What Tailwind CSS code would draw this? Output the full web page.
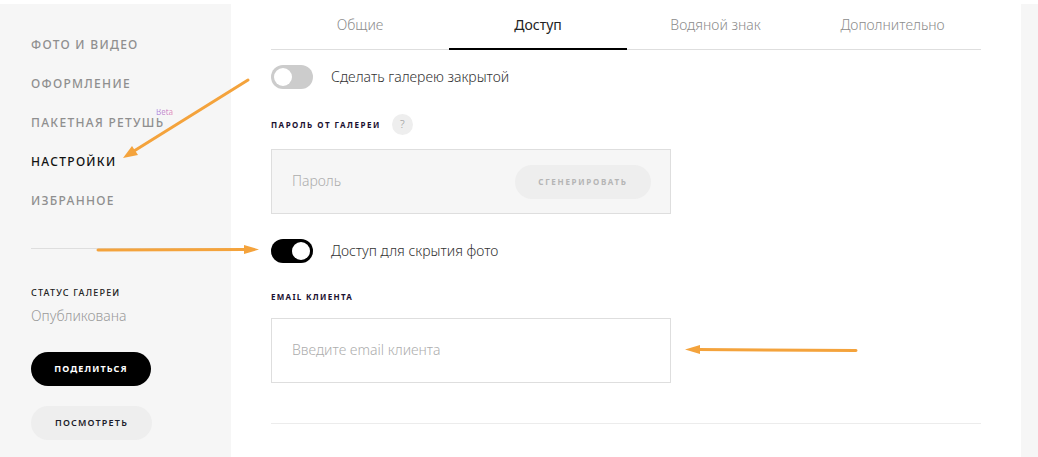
<!DOCTYPE html>
<html lang="ru">
<head>
  <meta charset="UTF-8">
  <title>Настройки галереи</title>
  <script src="https://cdn.jsdelivr.net/npm/@tailwindcss/browser@4"></script>
</head>
<body class="bg-white w-[1038px] h-[457px] overflow-hidden relative font-['Noto_Sans',sans-serif]">
  <div class="flex h-[457px] pt-1">
    <!-- sidebar -->
    <aside class="w-[231px] shrink-0 bg-[#f6f6f6] pl-[31px] pr-[31px]">
      <nav class="flex flex-col gap-[21px] pt-[32px] text-[12px] leading-[18px] font-medium tracking-[1.3px] text-[#8f8f8f]">
        <a>ФОТО И ВИДЕО</a>
        <a>ОФОРМЛЕНИЕ</a>
        <a class="relative">ПАКЕТНАЯ РЕТУШЬ<span class="absolute left-[125px] top-[-5px] text-[8px] leading-[6px] font-normal tracking-normal bg-gradient-to-r from-[#a88be2] to-[#e284b4] bg-clip-text text-transparent">Beta</span></a>
        <a class="text-[#111]">НАСТРОЙКИ</a>
        <a>ИЗБРАННОЕ</a>
      </nav>
      <div class="h-px bg-[#dedede] mt-[38px] w-[200px]"></div>
      <div class="mt-[38px] text-[9px] leading-[12px] font-medium tracking-[1.2px] text-[#222]">СТАТУС ГАЛЕРЕИ</div>
      <div class="mt-[7px] text-[14px] leading-[20px] font-light text-[#9a9a9a]">Опубликована</div>
      <button class="block mt-[26px] w-[120px] h-[34px] rounded-full bg-black text-white text-[9px] font-bold tracking-[1.1px]">ПОДЕЛИТЬСЯ</button>
      <button class="block mt-[20px] w-[121px] h-[34px] rounded-full bg-[#eeeeee] text-[#1c1c2a] text-[9px] font-semibold tracking-[1.2px]">ПОСМОТРЕТЬ</button>
    </aside>

    <!-- main -->
    <main class="w-[710px] ml-[40px] shrink-0">
      <div class="grid grid-cols-[178px_178px_177px_177px] h-[46px] border-b border-[#dedede] text-[14px] font-light text-[#8c8c8c] text-center">
        <div class="pt-[11px] leading-[20px]">Общие</div>
        <div class="pt-[11px] leading-[20px] text-[#222] font-normal border-b-2 border-black h-[46px]">Доступ</div>
        <div class="pt-[11px] leading-[20px]">Водяной знак</div>
        <div class="pt-[11px] leading-[20px]">Дополнительно</div>
      </div>

      <div class="flex items-center mt-[15px] h-6">
        <div class="w-[42px] h-6 rounded-full bg-[#cccccc] p-[3px] flex justify-start"><span class="w-[18px] h-[18px] rounded-full bg-white"></span></div>
        <span class="ml-[18px] pb-[2px] text-[14px] font-light text-[#333]">Сделать галерею закрытой</span>
      </div>

      <div class="flex items-center mt-[25px] h-[21px]">
        <span class="text-[8px] font-bold tracking-[1.5px] text-[#1a1030]">ПАРОЛЬ ОТ ГАЛЕРЕИ</span>
        <span class="ml-[11px] w-[21px] h-[21px] rounded-full bg-[#eeeeee] text-[11px] font-light text-[#9a9a9a] flex items-center justify-center">?</span>
      </div>

      <div class="flex items-center justify-between mt-[14px] w-[400px] h-[65px] border border-[#dedede] bg-[#f6f6f6] pl-[20px] pr-[19px]">
        <span class="pb-[2px] text-[14px] font-light text-[#adadad]">Пароль</span>
        <button class="w-[136px] h-[34px] rounded-full bg-[#eeeeee] text-[8px] font-bold tracking-[1.7px] text-[#b5b5b5]">СГЕНЕРИРОВАТЬ</button>
      </div>

      <div class="flex items-center mt-[25px] h-6">
        <div class="w-[42px] h-6 rounded-full bg-black p-[3px] flex justify-end"><span class="w-[18px] h-[18px] rounded-full bg-white"></span></div>
        <span class="ml-[18px] pb-[2px] text-[14px] font-light text-[#333]">Доступ для скрытия фото</span>
      </div>

      <div class="mt-[28px] text-[8px] leading-[12px] font-bold tracking-[1.3px] text-[#1a1030]">EMAIL КЛИЕНТА</div>

      <div class="flex items-center mt-[15px] w-[400px] h-[65px] border border-[#dedede] pl-[20px]">
        <span class="pb-[2px] text-[14px] font-light text-[#adadad]">Введите email клиента</span>
      </div>

      <div class="h-px bg-[#ececec] mt-[40px]"></div>
    </main>

    <div class="ml-[40px] w-[17px] bg-[#f6f6f6]"></div>
  </div>

  <!-- annotation arrows drawn over the screenshot -->
  <svg class="absolute left-0 top-0 pointer-events-none" width="1038" height="457" viewBox="0 0 1038 457">
    <g fill="#f4a33c" stroke="#f4a33c" stroke-linecap="round">
      <line x1="248" y1="80" x2="134" y2="151" stroke-width="3"/>
      <polygon points="123,158 132,146 138,155" stroke-width="0"/>
      <line x1="98" y1="250" x2="246" y2="249.5" stroke-width="3"/>
      <polygon points="259,249.5 244,245 244,254" stroke-width="0"/>
      <line x1="856" y1="350.5" x2="698" y2="349.5" stroke-width="3"/>
      <polygon points="685,349.5 700,345 700,354" stroke-width="0"/>
    </g>
  </svg>
</body>
</html>
